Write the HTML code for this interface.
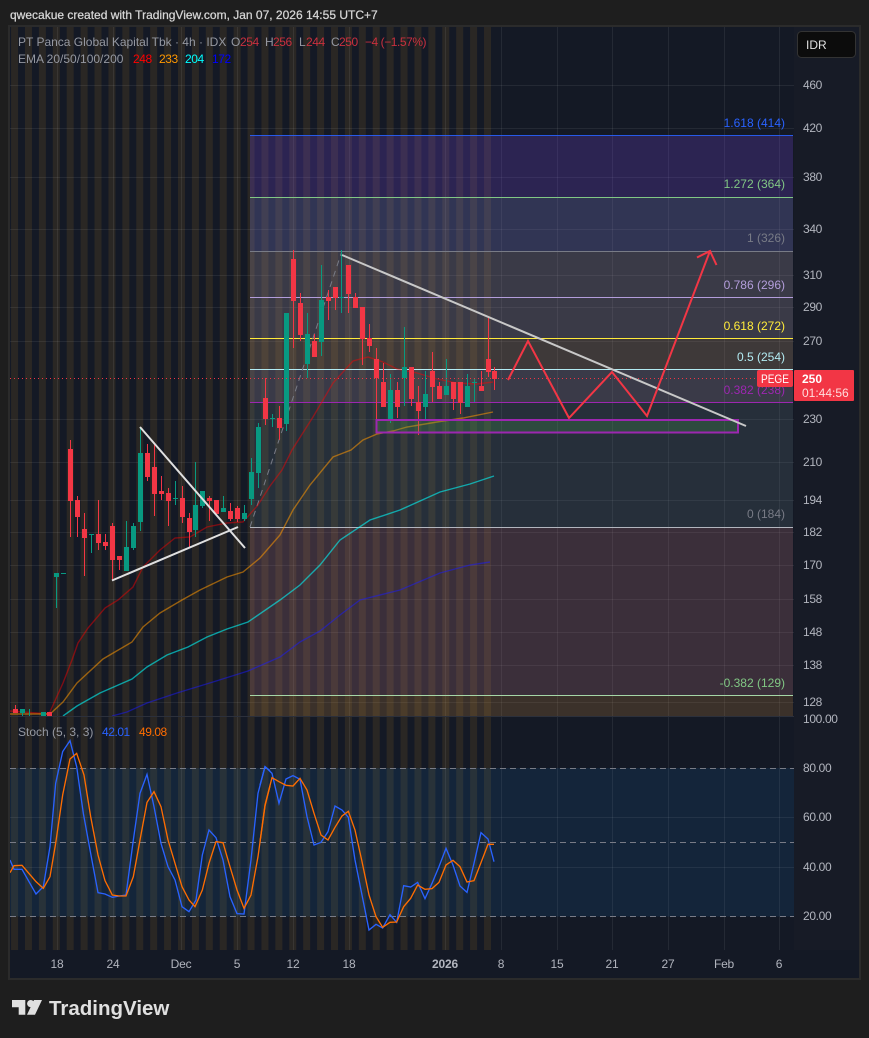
<!DOCTYPE html>
<html><head><meta charset="utf-8"><title>PT Panca Global Kapital Tbk</title>
<style>
html,body{margin:0;padding:0;background:#1e1e1e;width:869px;height:1038px;overflow:hidden}
svg{display:block;position:absolute;left:0;top:0}
text{font-family:"Liberation Sans",sans-serif;font-size:12px}
.ax text{fill:#b2b5be;letter-spacing:-.35px}
.t text{text-anchor:middle;fill:#b2b5be;letter-spacing:-.2px}
.fib text{text-anchor:end}
.v{letter-spacing:-.45px}
</style></head><body>
<svg width="869" height="1038" viewBox="0 0 869 1038" xmlns="http://www.w3.org/2000/svg">
<defs>
<pattern id="b" patternUnits="userSpaceOnUse" x="25" y="0" width="13.91" height="20"><rect width="6.95" height="20" fill="#2a2724"/></pattern>
<clipPath id="p1"><rect x="10" y="27" width="784" height="689"/></clipPath>
<clipPath id="p2"><rect x="10" y="717" width="784" height="233"/></clipPath>
</defs>
<rect width="869" height="1038" fill="#1e1e1e"/>
<text x="10" y="19" fill="#d6d6d6" stroke="#d6d6d6" stroke-width=".25">qwecakue created with TradingView.com, Jan 07, 2026 14:55 UTC+7</text>
<rect x="9" y="26" width="851" height="953" fill="#141925" stroke="#2b2b2b" stroke-width="2"/>
<rect x="794" y="27" width="65" height="923" fill="#171b26"/>
<rect x="10" y="27" width="481" height="923" fill="url(#b)"/>
<!-- grid -->
<g stroke="#fff" stroke-opacity=".07" stroke-width="1">
<path d="M57.5 27V950M113.5 27V950M181.5 27V950M237.5 27V950M293.5 27V950M349.5 27V950M445.5 27V950M501.5 27V950M557.5 27V950M612.5 27V950M668.5 27V950M724.5 27V950M779.5 27V950"/>
<path d="M10 85.5H794M10 128.5H794M10 177.5H794M10 229.5H794M10 275.5H794M10 307.5H794M10 341.5H794M10 419.5H794M10 462.5H794M10 500.5H794M10 532.5H794M10 565.5H794M10 599.5H794M10 632.5H794M10 665.5H794M10 702.5H794M10 817.5H794M10 867.5H794"/>
</g>
<!-- fib zones -->
<g>
<rect x="250" y="136" width="543" height="61" fill="rgb(116,72,220)" fill-opacity=".25"/>
<rect x="250" y="197" width="543" height="54" fill="rgb(130,130,210)" fill-opacity=".27"/>
<rect x="250" y="251" width="543" height="87" fill="rgb(157,145,160)" fill-opacity=".28"/>
<rect x="250" y="338" width="543" height="31" fill="rgb(163,133,107)" fill-opacity=".3"/>
<rect x="250" y="369" width="543" height="33" fill="rgb(153,143,157)" fill-opacity=".29"/>
<rect x="250" y="402" width="543" height="125" fill="rgb(110,135,145)" fill-opacity=".2"/>
<rect x="250" y="527" width="543" height="168" fill="rgb(176,116,124)" fill-opacity=".25"/>
<rect x="250" y="695" width="543" height="21" fill="rgb(176,124,60)" fill-opacity=".25"/>
</g>
<g fill="none" stroke-width="1">
<path d="M250 135.5H793" stroke="#2962ff" stroke-opacity=".9"/>
<path d="M250 197.5H793" stroke="#81c784"/>
<path d="M250 251.5H793" stroke="#787b86"/>
<path d="M250 297.5H793" stroke="#b39ddb"/>
<path d="M250 338.5H793" stroke="#ffeb3b"/>
<path d="M250 369.5H793" stroke="#b2ebf2"/>
<path d="M250 402.5H793" stroke="#9c27b0"/>
<path d="M250 527.5H793" stroke="#b2b5be"/>
<path d="M250 695.5H793" stroke="#a5d6a7"/>
</g>
<g class="fib">
<text x="785" y="127" fill="#2962ff">1.618 (414)</text>
<text x="785" y="188" fill="#81c784">1.272 (364)</text>
<text x="785" y="242" fill="#787b86">1 (326)</text>
<text x="785" y="289" fill="#b39ddb">0.786 (296)</text>
<text x="785" y="330" fill="#ffeb3b">0.618 (272)</text>
<text x="785" y="361" fill="#b2ebf2">0.5 (254)</text>
<text x="785" y="394" fill="#9c27b0">0.382 (238)</text>
<text x="785" y="518" fill="#787b86">0 (184)</text>
<text x="785" y="687" fill="#81c784">-0.382 (129)</text>
</g>
<g clip-path="url(#p1)">
<!-- fib trend -->
<path d="M250 527L342 251" stroke="#787b86" stroke-width="1" stroke-dasharray="6 5" fill="none"/>
<!-- EMAs -->
<g fill="none" stroke-width="1.4">
<polyline stroke="#ff0000" stroke-opacity=".45" points="10,711 49,714 63,683 72,660 78,643 88,628 105,608 118,600 133,587 143,567 160,550 175,538 190,537 207,527 227,523 243,522 258,505 270,486 282,470 292,450 313,417 333,383 353,361 368,357 383,362 397,369 417,373 437,379 457,383 477,384 493,382"/>
<polyline stroke="#ff9800" stroke-opacity=".55" points="10,714 50,714 63,702 77,683 103,659 132,642 143,627 160,613 182,600 200,590 227,577 243,572 260,558 280,535 293,510 310,485 333,457 351,450 363,440 377,434 393,431 407,427 437,422 463,418 493,412"/>
<polyline stroke="#00ffff" stroke-opacity=".58" points="63,716 77,706 100,693 132,679 147,667 167,655 188,647 207,637 227,629 248,622 280,600 300,585 320,565 340,540 370,520 400,510 440,492 470,484 494,476"/>
<polyline stroke="#1a1aff" stroke-opacity=".5" points="112,716 127,712 147,703 177,693 213,682 248,671 280,657 300,642 320,631 340,615 360,600 400,590 440,573 470,565 490,562"/>
</g>
<!-- candles -->
<path fill="none" stroke="#f23645" stroke-width="1" d="M70.5 440V537M77.5 496V537M84.5 513V576M98.5 500V550M105.5 534V550M112.5 523V580M119.5 556V570M147.5 444V481M154.5 444V516M161.5 476V500M168.5 488V526M182.5 486V523M189.5 513V547M209.5 496V521M216.5 500V516M230.5 503V521M237.5 506V522M265.5 378V425M279.5 406V440M293.5 250V348M300.5 293V341M314.5 334V357M328.5 290V320M335.5 287V310M348.5 265V313M355.5 293V308M362.5 307V365M369.5 324V352M376.5 348V430M383.5 363V407M397.5 382V418M411.5 367V406M418.5 386V435M432.5 352V402M439.5 382V399M453.5 382V410M460.5 382V414M481.5 371V391M488.5 317V377M494.5 367V390M15.5 705V713M49.5 712V716"/>
<path fill="none" stroke="#f23645" stroke-width="5" d="M70.5 449V501M77.5 500V517M84.5 529V538M98.5 534V543M105.5 542V546M112.5 526V560M119.5 556V560M147.5 453V477M154.5 467V494M161.5 491V494M168.5 493V501M182.5 498V517M189.5 518V532M209.5 498V501M216.5 500V514M230.5 511V519M237.5 508V519M265.5 398V419M279.5 418V428M293.5 259V301M300.5 303V335M314.5 341V357M328.5 297V301M335.5 287V298M348.5 265V294M355.5 297V308M362.5 307V339M369.5 338V346M376.5 359V378M383.5 382V407M397.5 390V407M411.5 367V399M418.5 402V411M432.5 371V387M439.5 386V399M453.5 382V399M460.5 382V403M481.5 386V391M488.5 359V372M494.5 371V379M15.5 709V713M49.5 712V716"/>
<path fill="none" stroke="#089981" stroke-width="1" d="M56.5 573V608M91.5 534V553M126.5 521V571M133.5 523V550M140.5 427V531M175.5 481V505M195.5 462V537M202.5 491V508M223.5 496V512M244.5 505V521M251.5 458V505M258.5 423V488M272.5 414V427M286.5 313V431M307.5 313V378M321.5 265V356M341.5 250V313M390.5 374V423M404.5 327V406M425.5 371V420M446.5 359V395M467.5 374V407M474.5 379V402M22.5 709V716M29.5 709V716M61 573.5H66"/>
<path fill="none" stroke="#089981" stroke-width="5" d="M56.5 573V577M91.5 534V535M126.5 547V571M133.5 526V548M140.5 453V522M175.5 498V499M195.5 505V530M202.5 491V506M223.5 508V512M244.5 513V519M251.5 472V499M258.5 427V473M272.5 418V419M286.5 313V424M307.5 334V364M321.5 300V342M341.5 297V298M390.5 390V420M404.5 367V378M425.5 394V407M446.5 386V395M467.5 386V407M474.5 382V383M22.5 709V713M43.5 712V716"/>
<!-- Current price line -->
<path d="M10 378.5H794" stroke="#f23645" stroke-width="1" stroke-dasharray="1 3"/>
<!-- box -->
<rect x="376.5" y="420" width="361.5" height="12.5" fill="#4caf50" fill-opacity=".22" stroke="#9c27b0" stroke-width="2"/>
<!-- trend lines -->
<path d="M140 427L245 548M112 580.5L238 527" stroke="#e0e0e0" stroke-width="2" fill="none"/>
<path d="M342 255L746 426" stroke="#c8c8c8" stroke-width="2" fill="none"/>
<!-- projection -->
<path d="M508 380L528 341L569 418L612 372L647 416L710 251M697 257.5L710 251L716.5 265" stroke="#f23645" stroke-width="2" fill="none"/>
</g>
<!-- stoch -->
<path d="M10 716.5H794" stroke="#2c303b"/>
<rect x="10" y="768" width="784" height="148.5" fill="#2196f3" fill-opacity=".1"/>
<path d="M10 768.5H794M10 842.5H794M10 916.5H794" stroke="#787b86" stroke-width="1" stroke-dasharray="6 4"/>
<g clip-path="url(#p2)">
<g transform="translate(0,700) scale(.33333)" fill="none" stroke-width="4">
<polyline stroke="#2962ff" points="30,480 42,508 66,508 108,582 130,560 150,440 167,250 188,155 210,122 230,200 250,340 272,460 294,578 315,582 337,592 358,588 378,585 400,420 420,280 441,223 462,320 483,430 504,500 525,540 546,620 567,635 588,600 607,465 627,390 648,413 669,480 690,590 711,641 732,642 753,480 774,280 795,200 810,212"/>
<polyline stroke="#ff6d00" points="30,518 42,497 66,496 108,545 130,565 150,530 167,430 188,285 210,177 230,160 252,225 272,350 294,465 315,542 337,585 358,588 378,588 400,530 420,420 441,307 462,275 483,320 504,420 525,490 546,560 567,600 585,620 607,570 627,490 648,425 669,428 690,500 711,570 732,625 753,585 774,470 795,318 810,258"/>
</g>
<g transform="translate(260,720) scale(.33333)" fill="none" stroke-width="4">
<polyline stroke="#2962ff" points="0,195 15,140 36,160 57,250 78,177 99,167 120,178 141,290 162,375 183,367 204,335 225,258 246,270 265,292 285,420 305,520 327,630 348,613 368,624 390,584 410,607 431,497 452,501 473,487 495,536 516,490 537,440 558,385 579,435 600,498 621,517 642,430 663,338 684,357 702,425"/>
<polyline stroke="#ff6d00" points="0,365 15,255 36,173 57,185 78,196 99,198 120,175 141,210 162,280 183,345 204,360 225,322 246,288 265,274 285,330 305,420 327,525 348,590 368,622 390,607 410,606 431,560 452,535 473,495 495,508 516,506 537,487 558,435 579,421 600,440 621,486 642,482 663,428 684,373 702,373"/>
</g>
</g>
<!-- legend -->
<text x="18" y="46" fill="#9598a1">PT Panca Global Kapital Tbk · 4h · IDX</text>
<text x="231" y="46" fill="#9598a1">O</text><text class="v" x="240" y="46" fill="#c9303e">254</text>
<text x="265" y="46" fill="#9598a1">H</text><text class="v" x="273" y="46" fill="#c9303e">256</text>
<text x="299" y="46" fill="#9598a1">L</text><text class="v" x="306" y="46" fill="#c9303e">244</text>
<text x="331" y="46" fill="#9598a1">C</text><text class="v" x="339" y="46" fill="#c9303e">250</text>
<text class="v" x="365" y="46" fill="#c9303e">−4 (−1.57%)</text>
<text x="18" y="63" fill="#9598a1">EMA 20/50/100/200</text>
<text class="v" x="133" y="63" fill="#ff0000">248</text><text class="v" x="159" y="63" fill="#ff9800">233</text>
<text class="v" x="185" y="63" fill="#00ffff">204</text><text class="v" x="212" y="63" fill="#0000ff">172</text>
<text x="18" y="736" fill="#9598a1">Stoch (5, 3, 3)</text>
<text class="v" x="102" y="736" fill="#2962ff">42.01</text><text class="v" x="139" y="736" fill="#ff6d00">49.08</text>
<!-- price axis -->
<g class="ax">
<text x="803" y="89">460</text><text x="803" y="132">420</text><text x="803" y="181">380</text><text x="803" y="233">340</text><text x="803" y="279">310</text><text x="803" y="311">290</text><text x="803" y="345">270</text><text x="803" y="423">230</text><text x="803" y="466">210</text><text x="803" y="504">194</text><text x="803" y="536">182</text><text x="803" y="569">170</text><text x="803" y="603">158</text><text x="803" y="636">148</text><text x="803" y="669">138</text><text x="803" y="706">128</text>
<text x="803" y="723">100.00</text><text x="803" y="772">80.00</text><text x="803" y="821">60.00</text><text x="803" y="871">40.00</text><text x="803" y="920">20.00</text>
</g>
<rect x="797.5" y="31.5" width="58" height="26" rx="4" fill="#0c0c0c" stroke="#333"/>
<text x="806" y="49" fill="#e0e0e0">IDR</text>
<rect x="757" y="370" width="36" height="17" rx="2" fill="#f23645"/>
<text x="761" y="383" fill="#fff" textLength="28" lengthAdjust="spacingAndGlyphs">PEGE</text>
<rect x="794" y="370" width="60" height="31" rx="1" fill="#f23645"/>
<text x="802" y="383" fill="#fff" style="font-weight:bold">250</text>
<text x="802" y="397" fill="#fdd">01:44:56</text>
<!-- time axis -->
<g class="t">
<text x="57" y="968">18</text><text x="113" y="968">24</text><text x="181" y="968">Dec</text><text x="237" y="968">5</text><text x="293" y="968">12</text><text x="349" y="968">18</text><text x="445" y="968" style="font-weight:bold">2026</text><text x="501" y="968">8</text><text x="557" y="968">15</text><text x="612" y="968">21</text><text x="668" y="968">27</text><text x="724" y="968">Feb</text><text x="779" y="968">6</text>
</g>
<!-- logo -->
<path fill="#e0e0e0" d="M12 1000h13.3v14.7h-6.6v-7.4H12z"/>
<circle cx="30.7" cy="1003.6" r="3.6" fill="#e0e0e0"/>
<path fill="#e0e0e0" d="M42 1000l-7 14.7h-8l7-14.7z"/>
<text x="49" y="1015" fill="#e0e0e0" style="font-size:20.5px;font-weight:bold">TradingView</text>
</svg>
</body></html>
